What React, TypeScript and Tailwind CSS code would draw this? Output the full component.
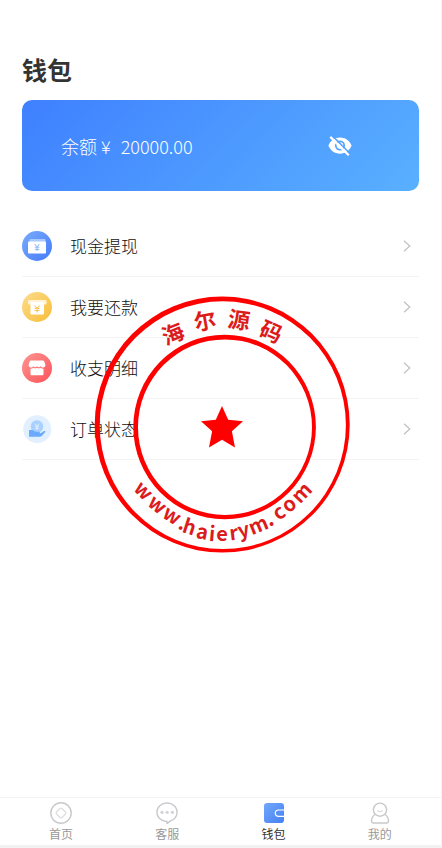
import React from "react";

const FONT = "font-['Noto_Sans_CJK_SC','Noto_Sans',sans-serif]";

function EyeOffIcon() {
  return (
    <svg viewBox="0 0 24 20" className="h-5 w-6" aria-hidden="true">
      <path
        fill="white"
        fillRule="evenodd"
        d="M12 1.400C6.600 1.400 2.200 4.700 .4 9.600C2.200 14.500 6.600 17.800 12 17.800S21.800 14.500 23.600 9.600C21.800 4.700 17.400 1.400 12 1.400ZM12 4.600a5 5 0 1 1 0 10a5 5 0 0 1 0-10Z"
      />
      <circle cx="12" cy="9.600" r="3.300" fill="white" />
      <path d="M4 -.5L22.500 18" stroke="#52a1ff" strokeWidth="1.600" />
      <path d="M2.300 .9L20.800 19.300" stroke="white" strokeWidth="2.200" />
    </svg>
  );
}

function WithdrawIcon() {
  return (
    <svg viewBox="0 0 30 30" className="size-[30px]" aria-hidden="true">
      <defs>
        <linearGradient id="blueDisc" x1="0" y1="0" x2="1" y2="1">
          <stop offset="0" stopColor="#78adfb" />
          <stop offset="1" stopColor="#4579fb" />
        </linearGradient>
      </defs>
      <circle cx="15" cy="15" r="15" fill="url(#blueDisc)" />
      <rect x="7.500" y="8" width="16" height="6" rx="1" fill="#a9cafd" />
      <rect x="6" y="10.500" width="18" height="12" rx="1" fill="white" />
      <path d="M12.800 13l2.300 3l2.300-3M12.800 16.200h4.600M12.800 18.300h4.600M15.100 16v4" stroke="#8bb9fb" strokeWidth="1" fill="none" />
    </svg>
  );
}

function RepayIcon() {
  return (
    <svg viewBox="0 0 30 30" className="size-[30px]" aria-hidden="true">
      <defs>
        <linearGradient id="goldDisc" x1="0" y1="0" x2="1" y2="1">
          <stop offset="0" stopColor="#fbdc8d" />
          <stop offset="1" stopColor="#f9bd38" />
        </linearGradient>
      </defs>
      <circle cx="15" cy="15" r="15" fill="url(#goldDisc)" />
      <rect x="6" y="8" width="18.500" height="4.500" rx="1" fill="#fff3d5" />
      <path d="M8.500 10h13.500v11.500q0 1-1 1H9.500q-1 0-1-1Z" fill="white" />
      <path d="M12.600 13.500l2.500 3l2.500-3M12.600 16.500h5M12.600 18.500h5M15.100 16v4.500" stroke="#f9c655" strokeWidth="1.100" fill="none" />
    </svg>
  );
}

function LedgerIcon() {
  return (
    <svg viewBox="0 0 30 30" className="size-[30px]" aria-hidden="true">
      <defs>
        <linearGradient id="redDisc" x1="0" y1="0" x2="1" y2="1">
          <stop offset="0" stopColor="#fd9692" />
          <stop offset="1" stopColor="#fc5158" />
        </linearGradient>
      </defs>
      <circle cx="15" cy="15" r="15" fill="url(#redDisc)" />
      <path d="M9 7.500h12q1 0 1.300 1l1.200 3.700a2.600 2.600 0 0 1-4.800 1a2.600 2.600 0 0 1-3.700 0a2.600 2.600 0 0 1-3.700 0a2.600 2.600 0 0 1-4.800-1L7.700 8.500q.3-1 1.300-1Z" fill="white" />
      <path d="M8.500 15.700q1.800 0 2.800-1q1.800 1.200 3.700 0q1.900 1.200 3.700 0q1 1 2.800 1v5.500q0 1-1 1h-11q-1 0-1-1Z" fill="white" />
    </svg>
  );
}

function OrderIcon() {
  return (
    <svg viewBox="0 0 30 30" className="size-[30px]" aria-hidden="true">
      <circle cx="15.200" cy="15.200" r="14" fill="#e1efff" />
      <circle cx="15" cy="12.500" r="6.300" fill="#a9d0ff" />
      <path d="M13 9.700l2 2.800l2-2.800M13.200 12.700h3.600M13.200 14.400h3.600M15 12.500v3.500" stroke="#e6f2ff" strokeWidth=".9" fill="none" />
      <path d="M7 16h3q1.200 0 2.200 1l1 .8h3.800q1.500.4.500 1.600h-3q3.500.3 5-.6l2.500-1.800q1.600-.3 1.500.8L20 21.800q-1 .9-2.500.9H7Z" fill="#6aaaff" />
    </svg>
  );
}

function Chevron() {
  return (
    <svg viewBox="0 0 8 12" className="mr-2 h-3 w-2" fill="none" stroke="#c0c0c0" strokeWidth="1.200" aria-hidden="true">
      <path d="M1 .8l5.800 5.200L1 11.200" />
    </svg>
  );
}

function HomeIcon() {
  return (
    <svg viewBox="0 0 22 22" className="size-[22px]" fill="none" aria-hidden="true">
      <circle cx="11" cy="11" r="10.200" stroke="#c9c9cd" strokeWidth="1.400" />
      <rect x="7.100" y="7.100" width="7.800" height="7.800" rx="1.800" transform="rotate(45 11 11)" stroke="#dedee1" strokeWidth="1.300" />
    </svg>
  );
}

function ServiceIcon() {
  return (
    <svg viewBox="0 0 22 22" className="size-[22px]" fill="none" aria-hidden="true">
      <path d="M9.200 19.200C4.600 18.700 .9 15 .9 10.200C.9 5 5.300 1 11 1s10.100 4 10.100 9.200c0 4.200-3 7.300-6.500 8.700L11 21.600v-2.300Z" stroke="#c9c9cd" strokeWidth="1.400" />
      <g fill="#d3d3d7">
        <circle cx="6" cy="10.300" r="1.600" />
        <circle cx="11.200" cy="10.300" r="1.600" />
        <circle cx="16.400" cy="10.300" r="1.600" />
      </g>
    </svg>
  );
}

function WalletIcon() {
  return (
    <svg viewBox="0 0 22 22" className="size-[22px]" fill="none" aria-hidden="true">
      <defs>
        <linearGradient id="walletFill" x1="0" y1="0" x2="1" y2="1">
          <stop offset="0" stopColor="#72a9fb" />
          <stop offset="1" stopColor="#4480f2" />
        </linearGradient>
      </defs>
      <rect x="1" y="1" width="20" height="20" rx="3" fill="url(#walletFill)" />
      <path d="M21 8h-5.500a3.200 3.200 0 0 0 0 6.400H21" stroke="white" strokeWidth="1.200" />
    </svg>
  );
}

function ProfileIcon() {
  return (
    <svg viewBox="0 0 22 22" className="size-[22px]" fill="none" stroke="#c9c9cd" strokeWidth="1.400" aria-hidden="true">
      <circle cx="11" cy="7.700" r="6.600" />
      <path d="M6.300 12.500C3.700 14 2.500 16.500 2.500 19q0 2 2 2h13q2 0 2-2c0-2.500-1.200-5-3.800-6.500" />
      <path d="M8.200 8.500q2.800 2.200 5.600 0" stroke="#dedee1" />
    </svg>
  );
}

type Glyph = { ch: string; x: number; y: number; turn: number };

const sealName: Glyph[] = [
  { ch: "海", x: 79, y: 38, turn: -22 },
  { ch: "尔", x: 111, y: 25, turn: -10 },
  { ch: "源", x: 145, y: 24, turn: 8 },
  { ch: "码", x: 177, y: 36, turn: 23 },
];

const sealSite: Glyph[] = [
  { ch: "w", x: 48, y: 196, turn: 46 },
  { ch: "w", x: 62, y: 210, turn: 39 },
  { ch: "w", x: 77, y: 221, turn: 32 },
  { ch: ".", x: 88, y: 229, turn: 24 },
  { ch: "h", x: 95, y: 233, turn: 18 },
  { ch: "a", x: 108, y: 238, turn: 11 },
  { ch: "i", x: 118, y: 240, turn: 5 },
  { ch: "e", x: 128, y: 240, turn: 0 },
  { ch: "r", x: 140, y: 239, turn: -7 },
  { ch: "y", x: 150, y: 236, turn: -13 },
  { ch: "m", x: 165, y: 231, turn: -22 },
  { ch: ".", x: 176, y: 225, turn: -28 },
  { ch: "c", x: 186, y: 218, turn: -33 },
  { ch: "o", x: 196, y: 210, turn: -38 },
  { ch: "m", x: 209, y: 198, turn: -46 },
];

function Seal() {
  return (
    <svg viewBox="0 0 256 258" className="pointer-events-none absolute top-[296px] left-[94px] h-[258px] w-[256px]">
      <g fill="#ff0000" fillRule="evenodd">
        <path d="M.7 128.600a127.500 128 0 1 0 255 0a127.500 128 0 1 0-255 0ZM5.700 129.200a123.100 123.900 0 1 1 246.200 0a123.100 123.900 0 1 1-246.200 0Z" />
        <path d="M39.300 131a91.300 92.300 0 1 0 182.600 0a91.300 92.300 0 1 0-182.600 0ZM44 131.200a87 87.800 0 1 1 174 0a87 87.800 0 1 1-174 0Z" />
        <path d="M128 110L134.200 123.800L149 125.300L137.900 135.200L141 151.500L128 143.800L115 151.500L118.100 135.200L107 125.300L121.800 123.800Z" />
      </g>
      <g fill="#dc1c1c" textAnchor="middle" className="font-['Noto_Sans_CJK_SC',sans-serif] text-[22px] font-bold">
        {sealName.map((g) => (
          <text key={g.ch} y="8" transform={`translate(${g.x} ${g.y}) rotate(${g.turn})`}>{g.ch}</text>
        ))}
      </g>
      <g fill="#dc1c1c" textAnchor="middle" className="font-['Noto_Sans_CJK_SC',sans-serif] text-[20px] font-bold">
        {sealSite.map((g) => (
          <text key={g.x} y="5" transform={`translate(${g.x} ${g.y}) rotate(${g.turn})`}>{g.ch}</text>
        ))}
      </g>
    </svg>
  );
}

const menu = [
  { label: "现金提现", icon: <WithdrawIcon /> },
  { label: "我要还款", icon: <RepayIcon /> },
  { label: "收支明细", icon: <LedgerIcon /> },
  { label: "订单状态", icon: <OrderIcon /> },
];

const tabs = [
  { label: "首页", icon: <HomeIcon />, active: false },
  { label: "客服", icon: <ServiceIcon />, active: false },
  { label: "钱包", icon: <WalletIcon />, active: true },
  { label: "我的", icon: <ProfileIcon />, active: false },
];

export default function App() {
  return (
    <div className={`relative flex min-h-screen flex-col border-r border-b-3 border-[#f2f2f2] bg-white text-[#333] ${FONT}`}>
      <main className="flex-1 px-[22px] pt-[49px]">
        <h1 className="text-[25px] leading-10 font-bold">钱包</h1>
        <section className="mt-[11px] flex h-[91px] items-center justify-between rounded-[10px] bg-[linear-gradient(135deg,#3f80ff,#59b0ff)] pr-[67px] pl-[39px] text-white">
          <p className="flex text-lg font-light">
            <span>余额</span>
            <span className="ml-1">¥</span>
            <span className="ml-2.5">20000.00</span>
          </p>
          <button type="button" aria-label="隐藏余额">
            <EyeOffIcon />
          </button>
        </section>
        <ul className="mt-[25px]">
          {menu.map((item) => (
            <li key={item.label} className="border-b border-[#f4f4f4]">
              <a href="#" className="flex h-[60px] items-center">
                {item.icon}
                <span className="ml-[18px] flex-1 text-[17px] font-light text-[#111]">{item.label}</span>
                <Chevron />
              </a>
            </li>
          ))}
        </ul>
      </main>
      <nav className="flex h-12 border-t border-[#f4f4f4] px-2">
        {tabs.map((tab) => (
          <a key={tab.label} href="#" className={`flex flex-1 flex-col items-center pt-1 text-xs leading-5 ${tab.active ? "text-[#333]" : "text-[#999]"}`}>
            {tab.icon}
            <span>{tab.label}</span>
          </a>
        ))}
      </nav>
      <Seal />
    </div>
  );
}
